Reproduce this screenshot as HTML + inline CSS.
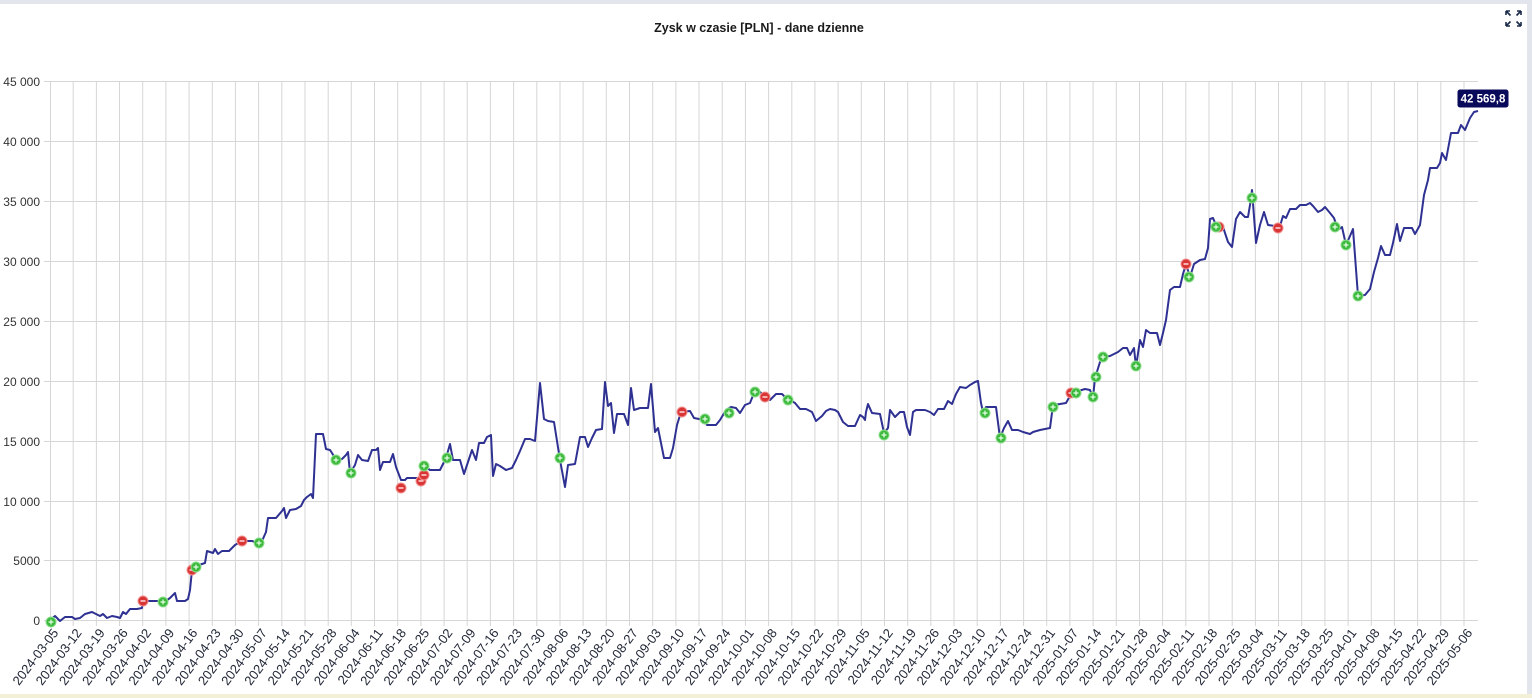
<!DOCTYPE html>
<html><head><meta charset="utf-8"><style>
html,body{margin:0;padding:0;background:#fff;width:1532px;height:698px;overflow:hidden;font-family:"Liberation Sans",sans-serif}
</style></head><body>
<svg width="1532" height="698" xmlns="http://www.w3.org/2000/svg" style="position:absolute;left:0;top:0">
<rect x="0" y="0" width="1532" height="698" fill="#fff"/>
<rect x="0" y="0" width="1532" height="4" fill="#e3e5ec"/>
<rect x="1527" y="0" width="5" height="698" fill="#e3e5ec"/>
<rect x="0" y="694" width="1532" height="4" fill="#f3f0d8"/>
<text x="759" y="32" text-anchor="middle" font-size="12.5" font-weight="bold" fill="#1a1a1a">Zysk w czasie [PLN] - dane dzienne</text>
<g stroke="#1a2a4a" stroke-width="1.6" fill="none">
<path d="M1506 11 L1510.5 15.5 M1506 11 V15 M1506 11 H1510"/>
<path d="M1521 11 L1516.5 15.5 M1521 11 V15 M1521 11 H1517"/>
<path d="M1506 26 L1510.5 21.5 M1506 26 V22 M1506 26 H1510"/>
<path d="M1521 26 L1516.5 21.5 M1521 26 V22 M1521 26 H1517"/>
</g>
<g stroke="#d6d6d6" stroke-width="1">
<path d="M44 81.5H1478M44 141.5H1478M44 201.5H1478M44 261.5H1478M44 321.5H1478M44 381.5H1478M44 441.5H1478M44 501.5H1478M44 560.5H1478M44 620.5H1478"/>
<path d="M50.5 81V626M73.2 81V626M96.4 81V626M119.5 81V626M142.7 81V626M165.9 81V626M189.1 81V626M212.3 81V626M235.4 81V626M258.6 81V626M281.8 81V626M305 81V626M328.2 81V626M351.3 81V626M374.5 81V626M397.7 81V626M420.9 81V626M444.1 81V626M467.2 81V626M490.4 81V626M513.6 81V626M536.8 81V626M560 81V626M583.1 81V626M606.3 81V626M629.5 81V626M652.7 81V626M675.9 81V626M699 81V626M722.2 81V626M745.4 81V626M768.6 81V626M791.8 81V626M814.9 81V626M838.1 81V626M861.3 81V626M884.5 81V626M907.7 81V626M930.8 81V626M954 81V626M977.2 81V626M1000.4 81V626M1023.6 81V626M1046.7 81V626M1069.9 81V626M1093.1 81V626M1116.3 81V626M1139.5 81V626M1162.6 81V626M1185.8 81V626M1209 81V626M1232.2 81V626M1255.4 81V626M1278.5 81V626M1301.7 81V626M1324.9 81V626M1348.1 81V626M1371.3 81V626M1394.4 81V626M1417.6 81V626M1440.8 81V626M1464 81V626"/>
</g>
<g font-size="12" fill="#333" text-anchor="end">
<text x="40" y="86">45 000</text><text x="40" y="146">40 000</text><text x="40" y="206">35 000</text><text x="40" y="266">30 000</text><text x="40" y="326">25 000</text><text x="40" y="386">20 000</text><text x="40" y="446">15 000</text><text x="40" y="506">10 000</text><text x="40" y="565">5000</text><text x="40" y="625">0</text>
</g>
<g font-size="13" fill="#222838" text-anchor="end">
<text transform="translate(59,633) rotate(-53)">2024-03-05</text>
<text transform="translate(82.2,633) rotate(-53)">2024-03-12</text>
<text transform="translate(105.4,633) rotate(-53)">2024-03-19</text>
<text transform="translate(128.5,633) rotate(-53)">2024-03-26</text>
<text transform="translate(151.7,633) rotate(-53)">2024-04-02</text>
<text transform="translate(174.9,633) rotate(-53)">2024-04-09</text>
<text transform="translate(198.1,633) rotate(-53)">2024-04-16</text>
<text transform="translate(221.3,633) rotate(-53)">2024-04-23</text>
<text transform="translate(244.4,633) rotate(-53)">2024-04-30</text>
<text transform="translate(267.6,633) rotate(-53)">2024-05-07</text>
<text transform="translate(290.8,633) rotate(-53)">2024-05-14</text>
<text transform="translate(314,633) rotate(-53)">2024-05-21</text>
<text transform="translate(337.2,633) rotate(-53)">2024-05-28</text>
<text transform="translate(360.3,633) rotate(-53)">2024-06-04</text>
<text transform="translate(383.5,633) rotate(-53)">2024-06-11</text>
<text transform="translate(406.7,633) rotate(-53)">2024-06-18</text>
<text transform="translate(429.9,633) rotate(-53)">2024-06-25</text>
<text transform="translate(453.1,633) rotate(-53)">2024-07-02</text>
<text transform="translate(476.2,633) rotate(-53)">2024-07-09</text>
<text transform="translate(499.4,633) rotate(-53)">2024-07-16</text>
<text transform="translate(522.6,633) rotate(-53)">2024-07-23</text>
<text transform="translate(545.8,633) rotate(-53)">2024-07-30</text>
<text transform="translate(569,633) rotate(-53)">2024-08-06</text>
<text transform="translate(592.1,633) rotate(-53)">2024-08-13</text>
<text transform="translate(615.3,633) rotate(-53)">2024-08-20</text>
<text transform="translate(638.5,633) rotate(-53)">2024-08-27</text>
<text transform="translate(661.7,633) rotate(-53)">2024-09-03</text>
<text transform="translate(684.9,633) rotate(-53)">2024-09-10</text>
<text transform="translate(708,633) rotate(-53)">2024-09-17</text>
<text transform="translate(731.2,633) rotate(-53)">2024-09-24</text>
<text transform="translate(754.4,633) rotate(-53)">2024-10-01</text>
<text transform="translate(777.6,633) rotate(-53)">2024-10-08</text>
<text transform="translate(800.8,633) rotate(-53)">2024-10-15</text>
<text transform="translate(823.9,633) rotate(-53)">2024-10-22</text>
<text transform="translate(847.1,633) rotate(-53)">2024-10-29</text>
<text transform="translate(870.3,633) rotate(-53)">2024-11-05</text>
<text transform="translate(893.5,633) rotate(-53)">2024-11-12</text>
<text transform="translate(916.7,633) rotate(-53)">2024-11-19</text>
<text transform="translate(939.8,633) rotate(-53)">2024-11-26</text>
<text transform="translate(963,633) rotate(-53)">2024-12-03</text>
<text transform="translate(986.2,633) rotate(-53)">2024-12-10</text>
<text transform="translate(1009.4,633) rotate(-53)">2024-12-17</text>
<text transform="translate(1032.6,633) rotate(-53)">2024-12-24</text>
<text transform="translate(1055.7,633) rotate(-53)">2024-12-31</text>
<text transform="translate(1078.9,633) rotate(-53)">2025-01-07</text>
<text transform="translate(1102.1,633) rotate(-53)">2025-01-14</text>
<text transform="translate(1125.3,633) rotate(-53)">2025-01-21</text>
<text transform="translate(1148.5,633) rotate(-53)">2025-01-28</text>
<text transform="translate(1171.6,633) rotate(-53)">2025-02-04</text>
<text transform="translate(1194.8,633) rotate(-53)">2025-02-11</text>
<text transform="translate(1218,633) rotate(-53)">2025-02-18</text>
<text transform="translate(1241.2,633) rotate(-53)">2025-02-25</text>
<text transform="translate(1264.4,633) rotate(-53)">2025-03-04</text>
<text transform="translate(1287.5,633) rotate(-53)">2025-03-11</text>
<text transform="translate(1310.7,633) rotate(-53)">2025-03-18</text>
<text transform="translate(1333.9,633) rotate(-53)">2025-03-25</text>
<text transform="translate(1357.1,633) rotate(-53)">2025-04-01</text>
<text transform="translate(1380.3,633) rotate(-53)">2025-04-08</text>
<text transform="translate(1403.4,633) rotate(-53)">2025-04-15</text>
<text transform="translate(1426.6,633) rotate(-53)">2025-04-22</text>
<text transform="translate(1449.8,633) rotate(-53)">2025-04-29</text>
<text transform="translate(1473,633) rotate(-53)">2025-05-06</text>
</g>
<polyline fill="none" stroke="#2e3192" stroke-width="2" stroke-linejoin="round" points="50,620 55,616 60,621 65,617 72,617 75,619 80,618 85,614 92,612 96,614 100,616 103,614 107,618 112,616 117,617 120,618 123,612 126,614 130,609 137,609 142,608 143,601 160,601 163,603 170,598 175,593 177,601 185,601 188,599 190,590 192,570 196,566 205,563 207,551 213,553 215,549 218,554 222,551 229,551 235,545 242,541 252,541 258,543 262,541 266,532 268,518 276,518 282,511 284,508 286,518 290,510 296,509 301,506 304,500 307,497 311,494 313,498 316,434 323,434 326,449 330,450 332,453 336,460 342,459 346,455 348,452 350,473 355,465 358,455 362,460 368,461 372,450 376,450 378,448 380,470 383,462 390,462 393,454 396,467 401,480 405,480 407,478 421,478 423,470 427,468 430,470 440,470 446,458 450,444 453,460 460,460 464,474 468,462 472,450 476,460 479,443 484,443 487,437 491,435 493,476 496,464 500,466 506,470 512,468 516,460 520,451 525,439 530,439 535,441 540,383 544,419 548,421 554,422 560,460 565,487 568,465 575,464 580,437 585,437 588,447 592,438 596,430 602,429 605,382 608,406 611,403 614,433 617,414 624,414 628,425 631,388 634,410 640,408 648,408 651,384 655,432 658,428 662,448 664,458 670,458 673,448 677,425 681,412 690,411 694,418 699,419 704,420 707,425 716,425 720,420 726,410 731,407 736,408 740,413 745,405 750,403 754,393 760,392 766,397 770,400 776,394 782,394 786,398 790,400 795,403 800,409 806,409 812,412 816,421 822,416 826,411 830,409 835,410 838,412 843,422 848,426 855,426 860,415 863,417 865,420 866,412 868,404 872,413 880,414 884,433 888,428 890,410 895,417 900,412 904,412 907,427 910,435 913,412 916,410 925,410 930,412 934,415 938,409 944,409 948,401 952,404 956,394 960,387 966,388 970,385 975,382 978,381 981,403 983,412 986,407 996,407 1000,438 1004,428 1008,421 1012,430 1018,430 1023,432 1030,434 1033,432 1040,430 1050,428 1053,405 1060,404 1066,403 1070,396 1075,392 1085,389 1090,390 1093,398 1095,378 1100,362 1103,357 1110,356 1118,352 1123,348 1127,348 1130,355 1134,348 1136,367 1140,340 1143,347 1146,330 1150,333 1157,333 1160,345 1163,333 1166,320 1170,290 1174,287 1180,287 1183,274 1186,264 1190,277 1194,264 1200,260 1205,259 1208,248 1210,219 1213,218 1216,225 1220,228 1223,227 1228,242 1232,247 1236,219 1240,212 1245,217 1248,217 1250,205 1252,190 1256,243 1260,225 1264,212 1268,225 1275,226 1280,226 1283,216 1286,218 1290,209 1296,209 1300,205 1306,205 1310,203 1313,206 1318,212 1322,210 1325,207 1330,213 1334,218 1338,230 1342,227 1346,245 1350,236 1353,229 1358,296 1365,295 1370,289 1374,272 1378,258 1381,246 1385,255 1390,255 1393,243 1397,224 1400,241 1404,228 1412,228 1415,234 1420,225 1424,195 1428,180 1430,168 1437,168 1440,163 1442,153 1446,160 1451,133 1458,133 1461,125 1465,130 1470,118 1474,112 1478,111"/>
<defs>
<g id="gp"><circle r="5" fill="#3dba3d" stroke="#8ede8e" stroke-width="1"/><path d="M-2.5 0H2.5M0 -2.5V2.5" stroke="#e8ffe8" stroke-width="1.2"/></g>
<g id="rm"><circle r="5" fill="#d93535" stroke="#f29090" stroke-width="1"/><path d="M-2.5 0H2.5" stroke="#ffe8e8" stroke-width="1.4"/></g>
</defs>
<g>
<use href="#rm" x="143" y="601"/><use href="#rm" x="192" y="570"/><use href="#rm" x="242" y="541"/><use href="#rm" x="401" y="488"/><use href="#rm" x="421" y="481"/><use href="#rm" x="424" y="475"/><use href="#rm" x="682" y="412"/><use href="#rm" x="765" y="397"/><use href="#rm" x="1071" y="393"/><use href="#rm" x="1186" y="264"/><use href="#rm" x="1219" y="227"/><use href="#rm" x="1278" y="228"/>
<use href="#gp" x="51" y="622"/><use href="#gp" x="163" y="602"/><use href="#gp" x="196" y="567"/><use href="#gp" x="259" y="543"/><use href="#gp" x="336" y="460"/><use href="#gp" x="351" y="473"/><use href="#gp" x="424" y="466"/><use href="#gp" x="447" y="458"/><use href="#gp" x="560" y="458"/><use href="#gp" x="705" y="419"/><use href="#gp" x="729" y="413"/><use href="#gp" x="755" y="392"/><use href="#gp" x="788" y="400"/><use href="#gp" x="884" y="435"/><use href="#gp" x="985" y="413"/><use href="#gp" x="1001" y="438"/><use href="#gp" x="1053" y="407"/><use href="#gp" x="1076" y="393"/><use href="#gp" x="1093" y="397"/><use href="#gp" x="1096" y="377"/><use href="#gp" x="1103" y="357"/><use href="#gp" x="1136" y="366"/><use href="#gp" x="1189" y="277"/><use href="#gp" x="1216" y="227"/><use href="#gp" x="1252" y="198"/><use href="#gp" x="1335" y="227"/><use href="#gp" x="1346" y="245"/><use href="#gp" x="1358" y="296"/>
</g>
<rect x="1457" y="89" width="52" height="19" rx="3" fill="#0a0a5a" stroke="#fff" stroke-width="1"/>
<text x="1483" y="102.5" text-anchor="middle" font-size="11.5" font-weight="bold" fill="#fff">42 569,8</text>
</svg>
</body></html>
